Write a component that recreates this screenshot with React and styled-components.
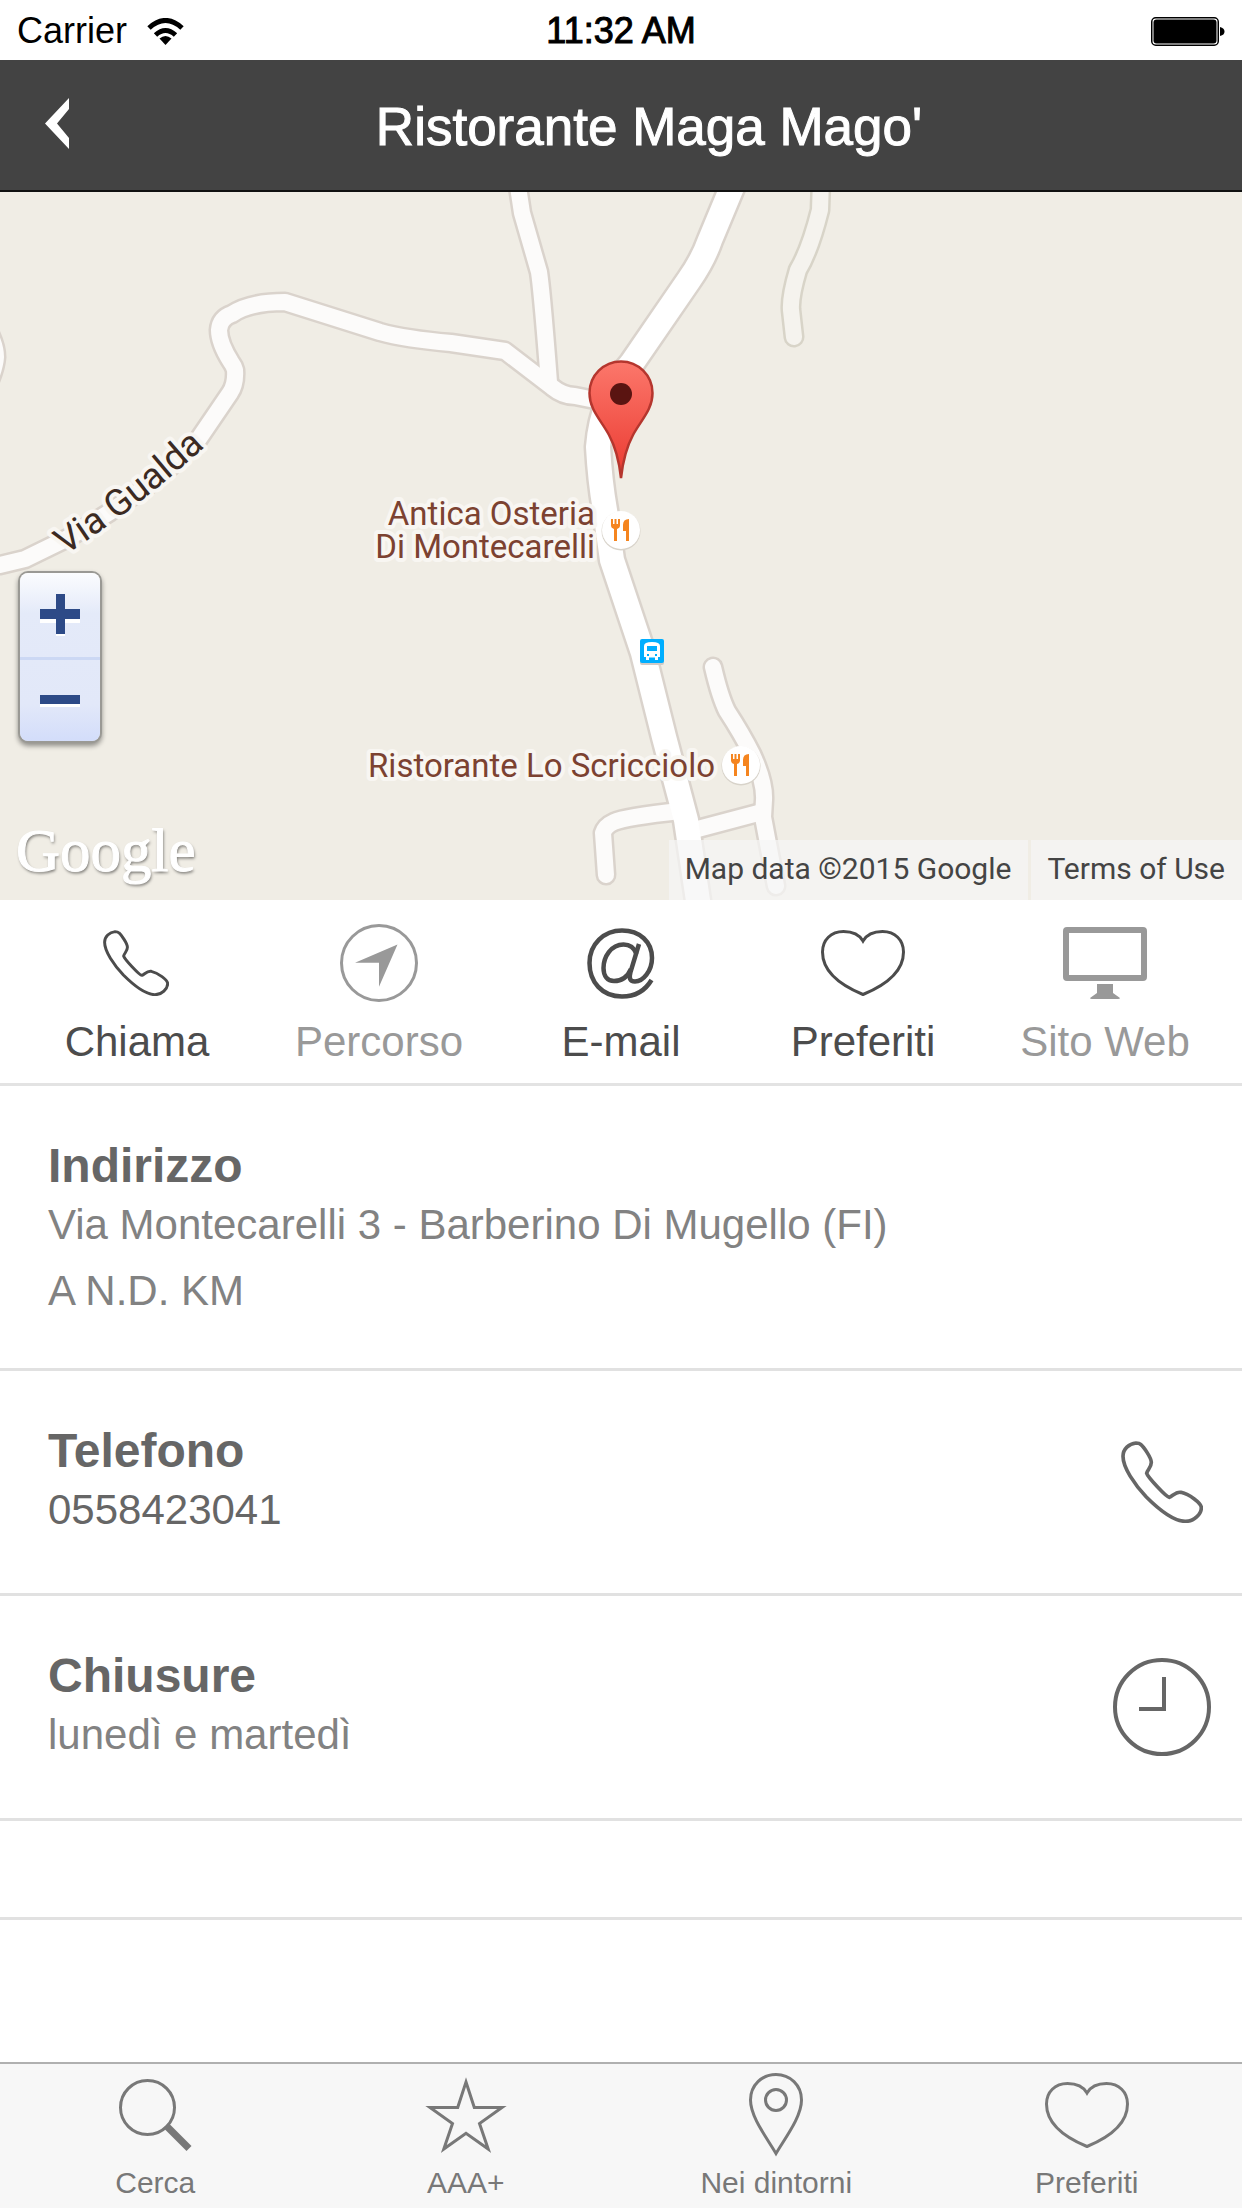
import React from "react";
import styled, { createGlobalStyle } from "styled-components";

const GlobalStyle = createGlobalStyle`
  *, *::before, *::after { box-sizing: border-box; }
  body {
    margin: 0;
    background: #fff;
    font-family: "Liberation Sans", Arial, Helvetica, sans-serif;
  }
  h1, h2, p, ul { margin: 0; padding: 0; }
  button { border: 0; margin: 0; padding: 0; background: none; font: inherit; color: inherit; }
  svg { display: block; }
`;

const Page = styled.div`
  display: flex;
  flex-direction: column;
  min-height: 100vh;
`;

const StatusBar = styled.div`
  display: grid;
  grid-template-columns: 1fr auto 1fr;
  align-items: center;
  height: 60px;
  padding: 2px 17px 0;
  font-size: 36px;
  line-height: 58px;
  color: #000;
`;

const Carrier = styled.div`
  display: flex;
  align-items: center;
  gap: 20px;
`;

const Time = styled.time`
  -webkit-text-stroke: 1px currentColor;
`;

const Power = styled.div`
  display: flex;
  justify-content: flex-end;
`;

const Header = styled.header`
  display: grid;
  grid-template-columns: 112px 1fr 56px;
  align-items: center;
  height: 132px;
  background: #434343;
  border-bottom: 2px solid #111;
  color: #fff;
`;

const BackButton = styled.button`
  display: flex;
  align-items: center;
  height: 100%;
  padding: 0 0 3px 45px;
`;

const Title = styled.h1`
  padding-top: 3px;
  font-size: 53px;
  font-weight: 400;
  line-height: 64px;
  text-align: center;
  -webkit-text-stroke: 1px currentColor;
`;

const MapPanel = styled.section`
  position: relative;
  height: 708px;
  overflow: hidden;
  background: #f0ede5;
`;

const MapDrawing = styled.svg`
  width: 100%;
  height: 100%;
`;

const PlaceLabel = styled.text`
  font-family: Roboto, sans-serif;
  font-size: ${(p) => (p.$road ? 37 : 33)}px;
  fill: ${(p) => (p.$road ? "#3b2a22" : "#7c4231")};
  stroke: #f8f6f2;
  stroke-width: 8px;
  stroke-linejoin: round;
  paint-order: stroke;
`;

const ZoomControl = styled.div`
  position: absolute;
  left: 20px;
  top: 381px;
  display: flex;
  flex-direction: column;
  width: 80px;
  border-radius: 8px;
  overflow: hidden;
  background: linear-gradient(#fbfcfe, #e4eaf9 24%, #e2e8f9 78%, #d3ddfa);
  box-shadow: 0 0 0 2px #9a9994, 0 3px 5px 2px rgba(0, 0, 0, 0.4);
`;

const ZoomButton = styled.button`
  display: grid;
  place-items: center;
  height: 84px;
  color: #2d4a87;

  & + & { border-top: 3px solid #ccd8f4; }
`;

const Logo = styled.span`
  position: absolute;
  left: 16px;
  bottom: 13px;
  font-family: "Liberation Serif", "Times New Roman", serif;
  font-size: 61px;
  line-height: 72px;
  color: #fff;
  -webkit-text-stroke: 1px currentColor;
  text-shadow: 1px 2px 3px rgba(0, 0, 0, 0.5);
`;

const Attribution = styled.div`
  position: absolute;
  right: 0;
  bottom: 0;
  display: flex;
  gap: 3px;
  font-family: Roboto, sans-serif;
  font-size: 30px;
  line-height: 58px;
  color: #444;

  & > * {
    padding: 0 17px 2px 16px;
    background: rgba(245, 245, 245, 0.72);
    color: inherit;
    text-decoration: none;
  }
`;

const Actions = styled.nav`
  display: grid;
  grid-template-columns: repeat(5, 1fr);
  padding: 21px 16px 17px;
  border-bottom: 3px solid #e3e3e3;
`;

const Action = styled.button`
  display: flex;
  flex-direction: column;
  align-items: center;
  gap: 13px;
  font-size: 42px;
  line-height: 48px;
  color: #4c4c4c;

  &:disabled { color: #999; }
`;

const InfoRow = styled.section`
  display: flex;
  align-items: center;
  justify-content: space-between;
  min-height: ${(p) => (p.$blank ? 99 : 225)}px;
  padding: ${(p) => (p.$blank ? "0" : "0 31px 0 48px")};
  border-bottom: 3px solid #e1e1e1;
  color: #666;
`;

const InfoText = styled.div`
  padding: 54px 0 44px;
  align-self: flex-start;
`;

const InfoTitle = styled.h2`
  font-size: 48px;
  line-height: 52px;
`;

const InfoLine = styled.p`
  font-size: 42px;
  line-height: 66px;
  color: ${(p) => (p.$strong ? "#666" : "#828282")};
`;

const RowIcon = styled.span`
  display: grid;
  place-items: center;
  width: 98px;
`;

const TabBar = styled.nav`
  display: grid;
  grid-template-columns: repeat(4, 1fr);
  margin-top: auto;
  padding: 9px 0 7px;
  border-top: 2px solid #b0b0b0;
  background: #f7f7f7;
`;

const Tab = styled.button`
  display: flex;
  flex-direction: column;
  align-items: center;
  gap: 8px;
  font-size: 30px;
  line-height: 36px;
  color: #787878;
`;

function Icon({ children, width = 3 }) {
  return (
    <svg width="84" height="84" viewBox="0 0 84 84" fill="none" stroke="currentColor" strokeWidth={width} aria-hidden="true">
      {children}
    </svg>
  );
}

const HANDSET =
  "M45 6C24 8 6 24 6 46C6 80 40 130 76 168C108 200 152 240 192 241C220 242 241 218 241 200C241 186 205 160 180 154C165 151 155 165 145 169C135 168 80 108 77 97C79 86 91 80 91 64C91 50 68 18 60 11C56 7 50 6 45 6Z";

function PhoneIcon({ size }) {
  return (
    <svg width={size} height={size} viewBox="0 0 246 246" fill="none" stroke="currentColor" strokeWidth="11" aria-hidden="true">
      <path d={HANDSET} />
    </svg>
  );
}

const CallIcon = () => (
  <Icon>
    <svg x="8" y="9" width="66" height="66" viewBox="0 0 246 246">
      <path d={HANDSET} strokeWidth="11" />
    </svg>
  </Icon>
);

const RouteIcon = () => (
  <Icon>
    <circle cx="42" cy="42" r="37.5" />
    <path d="M60.5 23.5L18 41.7H42V65.7Z" fill="currentColor" stroke="none" />
  </Icon>
);

const MailIcon = () => (
  <Icon width={4.5}>
    <path d="M72.500 59C66 70 55 75.500 43 75.500C23 75.500 10.500 61 10.500 42C10.500 23 25 9.500 43 9.500C61 9.500 73 21 73 37C73 50 64 60.500 56 60.500C50.500 60.500 50 57 51.500 51L60 23" />
    <path d="M57.500 33C55 26 50 23.500 44.500 23.500C32 23.500 24.500 36 24.500 47C24.500 55 28.500 60 35 60C43 60 49 55 52 48" />
  </Icon>
);

const HeartIcon = () => (
  <Icon>
    <path d="M42 20C38 13 31 10.5 22.5 10.5C10 10.5 1.5 19 1.5 31C1.5 50 19 64 42 73.5C65 64 82.5 50 82.5 31C82.5 19 74 10.5 61.5 10.5C53 10.5 46 13 42 20Z" />
  </Icon>
);

const ScreenIcon = () => (
  <Icon width={6}>
    <rect x="3" y="9" width="78" height="48" rx="1" />
    <path d="M34 63H50V72L57 77Q57 78 55 78H29Q27 78 27 77L34 72Z" fill="currentColor" stroke="none" />
  </Icon>
);

const SearchIcon = () => (
  <Icon>
    <circle cx="34.5" cy="34.5" r="27" />
    <path d="M53 52.5L76 75.5" strokeWidth="7" />
  </Icon>
);

const StarIcon = () => (
  <Icon>
    <path strokeMiterlimit="10" d="M42 9L50.3 34.5H78L55.5 50.6L64.2 76L42 60.3L19.8 76L28.5 50.6L6 34.5H33.7Z" />
  </Icon>
);

const PlaceIcon = () => (
  <Icon>
    <path d="M42 80.5C33 65 16.500 44 16.500 27C16.500 12 28 1.500 42 1.500C56 1.500 67.500 12 67.500 27C67.500 44 51 65 42 80.500Z" />
    <circle cx="42" cy="27" r="10.500" />
  </Icon>
);

const ClockIcon = () => (
  <svg width="98" height="98" viewBox="0 0 98 98" fill="none" stroke="currentColor" strokeWidth="4" aria-hidden="true">
    <circle cx="49" cy="49" r="47" />
    <path d="M51 19V51H26" />
  </svg>
);

const MINOR = [
  "M-12 373L0 373L25 367L70 345L110 320L160 285L198 248L230 201Q236 192 235 178Q234 174 231 170Q219 151 219 138Q220 126 232 122Q250 110 285 110L380 140Q405 147 451 151L505 159L552 195Q563 204 575 204L605 210",
  "M517 -12L522 21L539 80Q542 100 549 190",
  "M-18 128Q-4 150 -4 165Q-5 180 -18 205",
  "M713 475Q720 505 727 519Q742 542 752 562Q765 590 764 608L763 625L776 694",
  "M606 683L603 641Q605 634 614 630Q625 625 680 619",
  "M694 638L762 620",
];
const TRACK = "M821 -12L820 18Q810 58 798 78Q790 105 791 118L794 145";
const MAIN = "M735 -12L710 48Q703 68 689 88L632 171Q602 205 598 255Q600 290 605 318L612 368L643 461L664 545L686 628L700 722";

function Restaurant({ x, y }) {
  return (
    <g transform={`translate(${x} ${y})`}>
      <circle cy="1" r="19.500" fill="#d8d3ca" />
      <circle r="19" fill="#fff" />
      <path d="M-10 -11h2v5h1.500v-5h2v5h1.500v-5H-1V-4Q-1 -2 -4 -1V11H-7V-1Q-10 -2 -10 -4ZM8 -11V11H5V1H2V-5Q2 -11 8 -11Z" fill="#f5851f" />
    </g>
  );
}

function RoadMap() {
  return (
    <MapDrawing viewBox="0 0 1242 708" preserveAspectRatio="xMidYMid slice" role="img" aria-label="Mappa">
      <defs>
        <linearGradient id="pin" x1="0" y1="0" x2="0" y2="1">
          <stop offset="0" stopColor="#fc776b" />
          <stop offset="1" stopColor="#ea3a31" />
        </linearGradient>
        <path id="gualda" d="M65 363Q145 312 225 236" />
      </defs>
      <g fill="none" strokeLinejoin="round" strokeLinecap="round">
        <path d={TRACK} stroke="#d8d4c8" strokeWidth="21" />
        <path d={TRACK} stroke="#f5f3ee" strokeWidth="16" />
        {MINOR.map((d) => <path key={d} d={d} stroke="#dad3cc" strokeWidth="21" />)}
        <path d={MAIN} stroke="#dad3cc" strokeWidth="29" />
        {MINOR.map((d) => <path key={d} d={d} stroke="#fcfbfa" strokeWidth="16" />)}
        <path d={MAIN} stroke="#fff" strokeWidth="24" />
      </g>
      <PlaceLabel $road>
        <textPath href="#gualda">Via Gualda</textPath>
      </PlaceLabel>
      <PlaceLabel textAnchor="end">
        <tspan x="595" y="333">Antica Osteria</tspan>
        <tspan x="595" y="366">Di Montecarelli</tspan>
      </PlaceLabel>
      <PlaceLabel x="715" y="585" textAnchor="end">Ristorante Lo Scricciolo</PlaceLabel>
      <Restaurant x={621} y={338} />
      <Restaurant x={741} y={573} />
      <g transform="translate(640 447)">
        <rect y="2" width="24" height="24" rx="2" fill="#cfcac6" />
        <rect width="24" height="24" rx="2" fill="#00aeff" />
        <path d="M4 7Q4 3 12 3T20 7V18H18V21H15V18.500H9V21H6V18H4Z" fill="#fff" />
        <path d="M7 7H17V12H7ZM7 15H9V17H7ZM15 15H17V17H15Z" fill="#00aeff" />
      </g>
      <path d="M621 286C619 268 616 256 609 243C601 228 589.500 218 589.500 201A31.500 31.500 0 0 1 652.500 201C652.500 218 641 228 633 243C626 256 623 268 621 286Z" fill="url(#pin)" stroke="#b5362e" strokeWidth="2.500" />
      <circle cx="621" cy="202" r="11" fill="#5a1411" />
    </MapDrawing>
  );
}

export default function App() {
  return (
    <Page>
      <GlobalStyle />
      <StatusBar>
        <Carrier>
          Carrier
          <svg width="37" height="27" viewBox="0 0 37 27" fill="none" stroke="#000" strokeWidth="5" aria-hidden="true">
            <path d="M2 10Q18.500 -5 35 10M8.500 17Q18.500 8 28.500 17" />
            <path d="M12.500 20.500Q18.500 15.500 24.500 20.500L18.500 27Z" fill="#000" stroke="none" />
          </svg>
        </Carrier>
        <Time>11:32 AM</Time>
        <Power>
          <svg width="74" height="29" viewBox="0 0 74 29" aria-hidden="true">
            <rect x="0.750" y="0.750" width="66.500" height="27.500" rx="4" fill="none" stroke="#000" strokeWidth="1.500" />
            <rect x="2.500" y="2.500" width="63" height="24" rx="3" />
            <path d="M69 10Q73.500 11 73.500 14.500T69 19Z" />
          </svg>
        </Power>
      </StatusBar>

      <Header>
        <BackButton aria-label="Indietro">
          <svg width="24" height="51" viewBox="0 0 24 51" fill="currentColor" aria-hidden="true">
            <path d="M24 0V11L12 25.500L24 40V51L0 25.500Z" />
          </svg>
        </BackButton>
        <Title>Ristorante Maga Mago'</Title>
      </Header>

      <MapPanel>
        <RoadMap />
        <ZoomControl>
          <ZoomButton aria-label="Ingrandisci">
            <svg width="40" height="42" viewBox="0 0 40 42" aria-hidden="true">
              <path d="M0 18H16V2H25V18H40V29H25V42H16V29H0Z" fill="#fff" />
              <path d="M0 15H16V0H25V15H40V25H25V40H16V25H0Z" fill="currentColor" />
            </svg>
          </ZoomButton>
          <ZoomButton aria-label="Riduci">
            <svg width="40" height="12" viewBox="0 0 40 12" aria-hidden="true">
              <path d="M0 2H40V12H0Z" fill="#fff" />
              <path d="M0 0H40V9H0Z" fill="currentColor" />
            </svg>
          </ZoomButton>
        </ZoomControl>
        <Logo>Google</Logo>
        <Attribution>
          <span>Map data ©2015 Google</span>
          <a href="#terms">Terms of Use</a>
        </Attribution>
      </MapPanel>

      <Actions>
        <Action><CallIcon />Chiama</Action>
        <Action disabled><RouteIcon />Percorso</Action>
        <Action><MailIcon />E-mail</Action>
        <Action><HeartIcon />Preferiti</Action>
        <Action disabled><ScreenIcon />Sito Web</Action>
      </Actions>

      <InfoRow>
        <InfoText>
          <InfoTitle>Indirizzo</InfoTitle>
          <InfoLine>Via Montecarelli 3 - Barberino Di Mugello (FI)</InfoLine>
          <InfoLine>A N.D. KM</InfoLine>
        </InfoText>
      </InfoRow>
      <InfoRow>
        <InfoText>
          <InfoTitle>Telefono</InfoTitle>
          <InfoLine $strong>0558423041</InfoLine>
        </InfoText>
        <RowIcon><PhoneIcon size={82} /></RowIcon>
      </InfoRow>
      <InfoRow>
        <InfoText>
          <InfoTitle>Chiusure</InfoTitle>
          <InfoLine>lunedì e martedì</InfoLine>
        </InfoText>
        <RowIcon><ClockIcon /></RowIcon>
      </InfoRow>
      <InfoRow $blank />

      <TabBar>
        <Tab><SearchIcon />Cerca</Tab>
        <Tab><StarIcon />AAA+</Tab>
        <Tab><PlaceIcon />Nei dintorni</Tab>
        <Tab><HeartIcon />Preferiti</Tab>
      </TabBar>
    </Page>
  );
}
